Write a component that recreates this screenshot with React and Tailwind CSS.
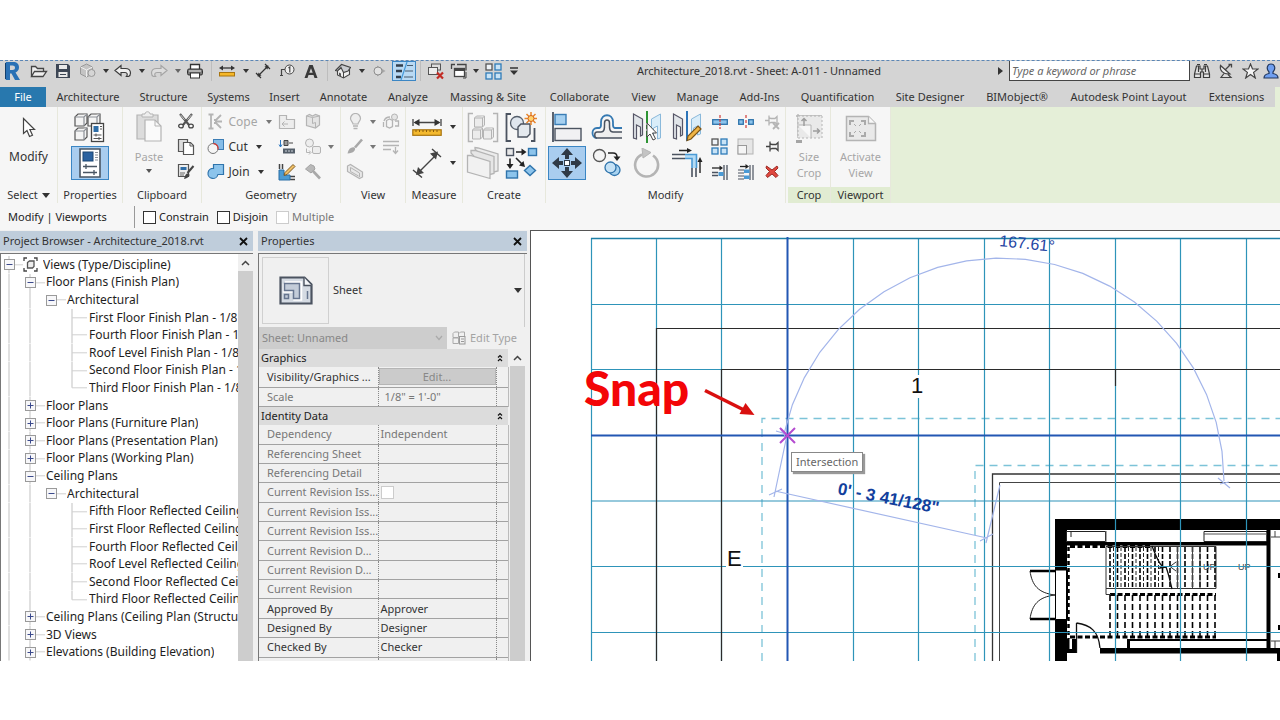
import React from "react";

const G = "#b4b4b4";

function Svg({ w, h, children, className = "" }) {
  return (
    <svg width={w} height={h} viewBox={`0 0 ${w} ${h}`} fill="none" className={`shrink-0 ${className}`} aria-hidden="true">
      {children}
    </svg>
  );
}

function Caret({ color = "#333" }) {
  return (
    <Svg w={6} h={4}>
      <path d="M0 0h6L3 4z" fill={color} />
    </Svg>
  );
}

function IconButton({ label, className = "", children }) {
  return (
    <button type="button" aria-label={label} className={`flex shrink-0 items-center justify-center ${className}`}>
      {children}
    </button>
  );
}

/* ---------- Quick access icons ---------- */

const LogoIcon = () => (
  <Svg w={18} h={20}>
    <path d="M2 2l3-1v18l-3-1z" fill="#123f6d" />
    <path fillRule="evenodd" d="M3 1h7c4 0 6 2 6 5.500 0 2.500-1.500 4-3.500 5L17 19h-5l-3.500-6.500H7V19H3zM7 4.500v4.500h2.500c1.500 0 2.500-.8 2.500-2.200S11 4.500 9.500 4.500z" fill="#2a71b5" />
  </Svg>
);
const OpenIcon = () => (
  <Svg w={18} h={14}>
    <path d="M1.500 12.500v-10h4l2 2h6v3M1.500 12.500l3-5h12l-3.500 5z" stroke="#444" strokeWidth="1.300" fill="#eee" />
  </Svg>
);
const SaveIcon = () => (
  <Svg w={16} h={16}>
    <path d="M1 1h12l2 2v12H1z" fill="#3d4654" />
    <path d="M4 2h8v4H4zM3.500 9h9v5h-9z" fill="#e8e8e8" />
    <path d="M5 11.500h6" stroke="#3d4654" />
  </Svg>
);
const SyncIcon = () => (
  <Svg w={18} h={18}>
    <path d="M1.500 5l6-3 6 3v7l-6 3-6-3z" fill="#c4c4c4" stroke="#999" />
    <path d="M1.500 5l6 3 6-3M7.500 8v7" stroke="#eee" />
    <circle cx="12.500" cy="11" r="3.500" fill="#d5d5d5" stroke="#999" />
  </Svg>
);
const UndoIcon = ({ color = "#3c3c3c", fill = "#eee" }) => (
  <Svg w={18} h={14}>
    <path d="M1 6.500L7 1.500v3h4.500c3 0 5 2 5 4.500 0 1.500-.8 3-2 3.500h-2c1.300-1.500 1-4-1.500-4H7v3z" fill={fill} stroke={color} strokeWidth="1.200" />
  </Svg>
);
const PrintIcon = () => (
  <Svg w={18} h={16}>
    <path d="M4.500 6V1.500h9V6" stroke="#333" strokeWidth="1.300" fill="#fff" />
    <rect x="1.500" y="6" width="15" height="6" rx="1.500" fill="#777" stroke="#333" />
    <rect x="4.500" y="10" width="9" height="5" fill="#fff" stroke="#333" />
    <path d="M3 8h12" stroke="#eee" />
  </Svg>
);
const RulerIcon = () => (
  <Svg w={16} h={12}>
    <path d="M2 3h12" stroke="#333" strokeWidth="1.300" />
    <path d="M0 3l4-2.500v5zM16 3l-4-2.500v5z" fill="#333" />
    <rect x=".5" y="7.500" width="15" height="3.500" fill="#f5b729" stroke="#a8740f" />
  </Svg>
);
const AlignedDimIcon = () => (
  <Svg w={16} h={16}>
    <path d="M3 13L13 3M1 10l5 5M10 1l5 5" stroke="#333" strokeWidth="1.200" />
    <path d="M2.500 13.500l1-4 3 3zM13.500 2.500l-1 4-3-3z" fill="#333" />
  </Svg>
);
const TagIcon = () => (
  <Svg w={16} h={14}>
    <circle cx="10.500" cy="5.500" r="4.500" stroke="#444" fill="#eee" />
    <path d="M9.500 4l1.300-1v5.500M6 5.500H2.500V11M1 11.500h3" stroke="#444" strokeWidth="1.200" />
  </Svg>
);
const LetterIcon = () => (
  <Svg w={14} h={15}>
    <path fillRule="evenodd" d="M5.300 1h3.400L13.500 14h-3l-1-3h-5l-1 3h-3zM7 4.200L5.300 8.800h3.400z" fill="#3a3a3a" />
  </Svg>
);
const HomeIcon = () => (
  <Svg w={16} h={16}>
    <path d="M2.500 7l5-2.500 7 2v5l-6 3.500-6-3z" fill="#eee" stroke="#444" strokeWidth="1.100" />
    <path d="M.5 7.500l6-6 9 3-2.500 3.500-4.500 1.500L6 4.500 2.500 8z" fill="#c9ccd0" stroke="#444" strokeWidth="1.100" />
    <path d="M4 9.500l2 1v3l-2-1z" fill="#555" />
    <path d="M8.500 9.500V15" stroke="#444" />
  </Svg>
);
const SectionIcon = () => (
  <Svg w={14} h={14}>
    <path d="M5 1.500L13.500 7 5 12.500z" fill="#a9a9a9" />
    <circle cx="6" cy="7" r="4" fill="#e2e2e2" stroke="#8d8d8d" />
  </Svg>
);
const ThinLinesIcon = () => (
  <Svg w={20} h={18}>
    <path d="M2 3.500h7M2 9h6M2 15h5" stroke="#333f4d" strokeWidth="2.600" />
    <path d="M13 3.500h6M11 9h8M10 15h9" stroke="#4b5d6e" strokeWidth="1.200" />
    <path d="M13 0L7 18" stroke="#4398d8" strokeWidth="1.200" />
  </Svg>
);
const CloseViewsIcon = () => (
  <Svg w={17} h={17}>
    <rect x="4.500" y="1" width="9" height="6" stroke="#555" fill="#ddd" />
    <rect x="1.500" y="4.500" width="9" height="7" stroke="#555" fill="#eee" />
    <path d="M10 9.500l6 6M16 9.500l-6 6" stroke="#c22c25" strokeWidth="2.200" />
  </Svg>
);
const SwitchIcon = () => (
  <Svg w={18} h={17}>
    <path d="M7 1.500h9v6M1.500 6V1.500H5" stroke="#444" strokeWidth="1.300" />
    <rect x="4.500" y="5.500" width="10" height="8" stroke="#444" strokeWidth="1.300" fill="#fff" />
    <path d="M4.500 7h10" stroke="#444" strokeWidth="2" />
    <path d="M16 9v6h-3" stroke="#444" />
  </Svg>
);
const TileIcon = () => (
  <Svg w={17} h={17}>
    <rect x="1" y="1" width="6" height="6" fill="#eef3f8" stroke="#555" strokeWidth="1.300" />
    <rect x="10" y="1" width="6" height="6" fill="#c8e3f6" stroke="#2e7cb8" strokeWidth="1.300" />
    <rect x="1" y="10" width="6" height="6" fill="#c8e3f6" stroke="#2e7cb8" strokeWidth="1.300" />
    <rect x="10" y="10" width="6" height="6" fill="#c8e3f6" stroke="#2e7cb8" strokeWidth="1.300" />
  </Svg>
);
const BinocularsIcon = () => (
  <Svg w={18} h={16}>
    <path d="M3.500 3h3.500v3h4V3h3.500l2 8v3.500h-6V9h-3v5.500h-6V11z" fill="#e3e3e3" stroke="#3c3c3c" strokeWidth="1.200" />
    <path d="M4 1.500h3M11 1.500h3M1.500 11h6M10.500 11h6M9 6v3M5.500 3v6M12.500 3v6" stroke="#3c3c3c" strokeWidth="1.200" />
  </Svg>
);
const DishIcon = () => (
  <Svg w={16} h={16}>
    <path d="M6 10.500L3 14.500h10l-3-3" stroke="#444" strokeWidth="1.200" fill="#ddd" />
    <path d="M2.500 2.500c-1 4.500 2 9 9.500 8.500z" stroke="#444" strokeWidth="1.200" fill="#eee" />
    <path d="M7 7l5-5M10.500 1.500h3v3" stroke="#444" strokeWidth="1.300" />
  </Svg>
);
const StarIcon = () => (
  <Svg w={17} h={16}>
    <path d="M8.500 1l2 5h5.500l-4.400 3.400L13.300 15 8.500 11.600 3.700 15l1.700-5.600L1 6h5.500z" stroke="#444" strokeWidth="1.200" fill="#f5f5f5" />
  </Svg>
);
const UserIcon = () => (
  <Svg w={16} h={16}>
    <path d="M1 15c0-3 2-4 5-4.500V9C3 6 4 1 8 1s5 5 2 8v1.500c3 .5 5 1.500 5 4.500z" fill="#6f9ff0" stroke="#23395f" strokeWidth="1.200" />
  </Svg>
);

/* ---------- Ribbon icons ---------- */

const CursorIcon = () => (
  <Svg w={14} h={22}>
    <path d="M1.500 1.500v15l3.500-3 2.500 6 3-1.300-2.600-5.700H12.500z" fill="#fff" stroke="#444" strokeWidth="1.200" />
  </Svg>
);
const TypePropsIcon = () => (
  <Svg w={32} h={32}>
    {[[1, 2], [14, 2], [1, 16]].map(([x, y]) => (
      <g key={`${x}-${y}`} stroke="#555" strokeWidth="1.200" fill="#f4f4f4">
        <path d={`M${x} ${y + 4}l3-3h9v9l-3 3h-9z`} />
        <path d={`M${x} ${y + 4}h9l3-3M${x + 9} ${y + 4}v9`} stroke="#8b8f96" />
      </g>
    ))}
    <rect x="17.500" y="12.500" width="12" height="18" fill="#fff" stroke="#444" strokeWidth="1.300" />
    <rect x="19.500" y="15" width="5" height="6" fill="#2f6ea8" />
    <path d="M26 15.500h2M26 18h2M19.500 24h8M19.500 27.500h8M22 22.500v3M25 26v3" stroke="#555" />
  </Svg>
);
const PropsIcon = () => (
  <Svg w={24} h={32}>
    <path d="M2 2h20v28H2z" fill="#fff" stroke="#4a5663" strokeWidth="1.600" />
    <rect x="5" y="5" width="10" height="9" fill="#2b62a0" stroke="#1d4673" />
    <path d="M17 5.500h3M17 8h3M17 10.500h3M17 13h3" stroke="#8a9099" />
    <path d="M5 19.500h14M5 25.500h14M8 17v5M16 23v5" stroke="#4a5663" strokeWidth="1.300" />
  </Svg>
);
const PasteIcon = () => (
  <Svg w={28} h={32}>
    <path d="M2 4h21v24H2z" fill="#dcdcdc" stroke={G} strokeWidth="1.200" />
    <path d="M7 6V3h3c0-3 5-3 5 0h3v3z" fill="#eee" stroke={G} />
    <path d="M10 9h10l6 6v15H10z" fill="#fafafa" stroke={G} strokeWidth="1.200" />
    <path d="M20 9v6h6" stroke={G} />
  </Svg>
);
const CutIcon = () => (
  <Svg w={18} h={17}>
    <path d="M3 1l9 11M15 1L6 12" stroke="#555" strokeWidth="2.200" />
    <path d="M3.500 1.800l4 4.800M14.500 1.800l-4 4.800" stroke="#eee" strokeWidth=".8" />
    <ellipse cx="4" cy="13" rx="2.300" ry="1.900" stroke="#444" strokeWidth="1.300" />
    <ellipse cx="14" cy="13" rx="2.300" ry="1.900" stroke="#444" strokeWidth="1.300" />
  </Svg>
);
const CopyIcon = () => (
  <Svg w={18} h={18}>
    <path d="M1.500 1.500h9v12h-9z" fill="#ddd" stroke="#555" strokeWidth="1.200" />
    <path d="M6.500 4.500h7l3 3v9h-10z" fill="#fff" stroke="#555" strokeWidth="1.200" />
    <path d="M13 4.500V8h3.500" stroke="#555" />
  </Svg>
);
const MatchIcon = () => (
  <Svg w={18} h={18}>
    <path d="M1.500 1.500h10v12h-10z" fill="#eee" stroke="#555" strokeWidth="1.200" />
    <path d="M3.500 4h6v3h-6z" fill="#2f6ea8" />
    <path d="M3 10h5M3 12h4" stroke="#666" />
    <path d="M16.500 3l-6 7" stroke="#444" strokeWidth="2" />
    <path d="M7 16c1-4 2-6 4.500-5.500 2 1 1 4.500-4.500 5.500z" fill="#444" />
  </Svg>
);
const CopeIcon = () => (
  <Svg w={17} h={17}>
    <path d="M1.500 1.500h5M1.500 15.500h5M4 2v13M7 7h2l5-5M7 10h2l5 5M8 8.500h7" stroke={G} strokeWidth="1.800" />
  </Svg>
);
const CutGeomIcon = () => (
  <Svg w={18} h={17}>
    <rect x="6.500" y="1.500" width="10" height="10" fill="#86bde8" stroke="#3c7db5" />
    <circle cx="6" cy="10.500" r="5" fill="#f5f5f5" stroke="#777" />
    <path d="M6.500 5.500a5 5 0 0 1 4.500 6" stroke="#cf3b38" strokeWidth="1.300" />
  </Svg>
);
const JoinGeomIcon = () => (
  <Svg w={18} h={17}>
    <path d="M6.500 1.500h10v10h-5.600A5 5 0 1 1 6.500 5.500z" fill="#8cc4ec" stroke="#2f74ac" strokeWidth="1.200" />
  </Svg>
);
const NotchIcon = () => (
  <Svg w={18} h={16}>
    <path d="M1.500 1.500h7v4h8v9h-15z" fill="#ededed" stroke={G} strokeWidth="1.200" />
    <path d="M10 10H4M6.500 7.500L4 10l2.500 2.500" stroke={G} />
  </Svg>
);
const BoxIcon = () => (
  <Svg w={16} h={17}>
    <path d="M1.500 3l3-1.500 3 1.500 3-1.500 4 1.500v9l-4 3-9-2.500z" fill="#e4e4e4" stroke={G} strokeWidth="1.200" />
    <path d="M1.500 3l6 1.500 7-1.500M7.500 4.500v6l3-1v5.500" stroke={G} />
  </Svg>
);
const SplitIcon = () => (
  <Svg w={18} h={16}>
    <path d="M2.500 1v7M1 5.500L2.500 8 4 5.500" stroke="#2f78c0" />
    <path d="M6 1.500h4v5H6zM11 4h4" stroke="#444" fill="#999" />
    <rect x="5" y="9.500" width="12" height="5" fill="#555f6a" />
    <path d="M7 12h9" stroke="#cfd6dd" strokeDasharray="2 1" />
  </Svg>
);
const OffsetShapesIcon = () => (
  <Svg w={18} h={17}>
    <circle cx="5.500" cy="5" r="4" stroke={G} fill="#eee" />
    <rect x="8.500" y="8.500" width="8" height="7" rx="1.500" stroke={G} fill="#eee" />
    <path d="M2.500 10.500v4H6M5 12.500l2 2-2 2" stroke={G} />
  </Svg>
);
const WallEditIcon = () => (
  <Svg w={18} h={18}>
    <path d="M1.500 1v5M4.500 1v5M12 16.500h5M12 13.500h5" stroke="#444" strokeWidth="1.500" />
    <path d="M1 7h5v5h6v5H1z" fill="#4b9bd3" stroke="#2b6fa5" />
    <path d="M15 1.500l2 2-8 8-3 1 1-3z" fill="#f0c066" stroke="#7d5a22" />
  </Svg>
);
const HammerIcon = () => (
  <Svg w={18} h={17}>
    <path d="M1.500 6l5-4.500L10 3l1 3-4 4z" fill="#b9b9b9" stroke="#a3a3a3" />
    <path d="M8.500 7.500l7.500 8" stroke="#a9a9a9" strokeWidth="2.600" />
  </Svg>
);
const BulbIcon = () => (
  <Svg w={13} h={17}>
    <path d="M4 11C4 9 1.500 8 1.500 5.500a5 5 0 0 1 10 0C11.500 8 9 9 9 11z" fill="#eee" stroke={G} strokeWidth="1.200" />
    <path d="M4 13h5M4.500 15.500h4" stroke={G} strokeWidth="1.500" />
  </Svg>
);
const LinkBoxIcon = () => (
  <Svg w={18} h={17}>
    <circle cx="12.500" cy="4" r="3" stroke={G} fill="#e5e5e5" />
    <path d="M2 8c1-3 3-4 6-4M4.500 7.500l3-1.500 3 1.500v6l-3 1.500-3-1.500zM1.500 9v5M13 8h3.500v5H13" stroke={G} strokeWidth="1.300" />
  </Svg>
);
const BrushIcon = () => (
  <Svg w={18} h={17}>
    <path d="M16 1.500l-7 8" stroke="#a8a8a8" strokeWidth="2.600" />
    <path d="M1.500 15.500c1-5 4-7 7-6 2 2-1 6-7 6z" fill="#a8a8a8" />
  </Svg>
);
const LinesIcon = () => (
  <Svg w={18} h={16}>
    <path d="M1 2.500h16M1 6.500h16M1 10.500h8" stroke={G} strokeWidth="1.500" />
    <path d="M13.500 8v6M11 11.500l2.500 3 2.500-3" stroke={G} strokeWidth="1.300" />
  </Svg>
);
const BeamIcon = () => (
  <Svg w={18} h={17}>
    <path d="M1.500 3l3-1.500 12 7.500v5l-3 1.500-12-7z" fill="#e8e8e8" stroke={G} strokeWidth="1.200" />
    <path d="M4.500 4.500l9 5.500v4M4.500 4.500v4l8 4.500" stroke={G} />
  </Svg>
);
const BigRulerIcon = () => (
  <Svg w={30} h={20}>
    <path d="M3 5.500h24M1 2v7M29 2v7" stroke="#444" strokeWidth="1.300" />
    <path d="M1.500 5.500l6-3.500v7zM28.500 5.500l-6-3.500v7z" fill="#333" />
    <rect x=".8" y="12.800" width="28.400" height="5.500" fill="#f4b92e" stroke="#a8740f" strokeWidth="1.200" />
    <path d="M4 13v2M7.500 13v2M11 13v2M14.500 13v2M18 13v2M21.500 13v2M25 13v2" stroke="#8a5c0a" />
  </Svg>
);
const BigDimIcon = () => (
  <Svg w={30} h={30}>
    <path d="M6 25L25 6M1 22l9 7.500M20 1l9 8" stroke="#444" strokeWidth="1.400" />
    <path d="M4 27l2-8 6 6zM26 3.500l-2 8-6-6z" fill="#444" />
  </Svg>
);
const AssemblyIcon = () => (
  <Svg w={32} h={31}>
    <path d="M6 1.500H1.500v28H6M26 1.500h4.500v28H26" stroke={G} strokeWidth="1.500" />
    <g fill="#ececec" stroke={G}>
      <path d="M7.500 6l2-2h8v9l-2 2h-8zM5.500 18l2-2h8v9l-2 2h-8zM16.500 18l2-2h8v9l-2 2h-8z" />
      <path d="M7.500 6h8l2-2M15.500 6v9M5.500 18h8l2-2M13.500 18v9M16.500 18h8l2-2M24.500 18v9" />
    </g>
  </Svg>
);
const CreateGroupIcon = () => (
  <Svg w={32} h={31}>
    <path d="M6 2H1.500v27H6M26 29h3.500V16" stroke="#4b5360" strokeWidth="1.800" />
    <circle cx="12" cy="11" r="6.500" fill="#dfe6ee" stroke="#555f6c" strokeWidth="1.300" />
    <path d="M13 15l3-3h9v10l-3 3h-9z" fill="#e4e9ee" stroke="#4b5360" strokeWidth="1.400" />
    <path d="M26 0v13M19.500 6.500H32M21.500 2l9 9M30.500 2l-9 9" stroke="#e8862c" strokeWidth="1.500" />
    <circle cx="26" cy="6.500" r="3" fill="#ffd26b" stroke="#d5621b" />
  </Svg>
);
const PartsIcon = () => (
  <Svg w={34} h={34}>
    <path d="M9 3V1.500l3 .5 20 6v17l-4 1z" fill="#ececec" stroke={G} strokeWidth="1.300" />
    <path d="M5 7V4.500h4l19 6v17l-4 1z" fill="#e6e6e6" stroke={G} strokeWidth="1.300" />
    <path d="M1.500 9.500h3L24 15.500v17L1.500 26z" fill="#f1f1f1" stroke={G} strokeWidth="1.300" />
  </Svg>
);
const SimilarIcon = () => (
  <Svg w={33} h={33}>
    <rect x="1.500" y="1.500" width="7" height="7" stroke="#4b5360" strokeWidth="1.400" fill="#e8e8e8" />
    <path d="M11 5h8M5 11.500v8M11 11l6 6" stroke="#222" strokeWidth="1.600" />
    <path d="M21.500 5l-5-3.500v7zM5 22l-3.500-5h7zM20 20l-1.500-6-4.500 4.500z" fill="#222" />
    <rect x="23.500" y="1.500" width="8" height="7" fill="#8cc4ec" stroke="#2f74ac" strokeWidth="1.400" />
    <rect x="1.500" y="24" width="11" height="7" fill="#8cc4ec" stroke="#2f74ac" strokeWidth="1.400" />
    <path d="M25 18.500l5.500 5-5.500 5-5.500-5z" fill="#8cc4ec" stroke="#2f74ac" strokeWidth="1.400" />
  </Svg>
);
const AlignIcon = () => (
  <Svg w={32} h={32}>
    <path d="M2 1v30" stroke="#4b5360" strokeWidth="1.800" />
    <rect x="4" y="3.500" width="11" height="10" fill="#a6d0f0" stroke="#3a7db5" strokeWidth="1.400" />
    <rect x="4" y="17.500" width="26" height="12" fill="#f1f1f3" stroke="#4b5360" strokeWidth="1.400" />
  </Svg>
);
const OffsetIcon = () => (
  <Svg w={32} h={28}>
    <path d="M6 25c-6 0-6-10 0-10h2.500c2-.5 1.500-3 1.500-6 0-9 12-9 12 0 0 3-.5 5.500 1.500 6H31" stroke="#3579b2" strokeWidth="1.800" />
    <path d="M31 25H6c-3 0-3-6 0-6h4c4 0 3.500-5 3.500-9s5-4 5 0-.5 9 3.500 9h9" stroke="#4b5360" strokeWidth="1.500" fill="#efefef" />
  </Svg>
);
const MirrorPickIcon = () => (
  <Svg w={30} h={32}>
    <path d="M1.500 3l9 5v16l-2 1v-9l-4-2v14l-3-1z" strokeWidth="1.200" stroke="#556" fill="#e1e5e9" />
    <path d="M28.500 3l-9 5v16l2 1v-8l4-2v13l3-1z" stroke="#8ab9db" fill="#d9edf9" />
    <path d="M15 0v32" stroke="#2e9434" strokeWidth="2" strokeDasharray="12 2 4 2" />
    <path d="M15 12v14l3-3 3 6 2.500-1.200-3-5.800h4z" fill="#fff" stroke="#444" />
  </Svg>
);
const MirrorDrawIcon = () => (
  <Svg w={30} h={32}>
    <path d="M1.500 3l9 5v16l-2 1v-9l-4-2v14l-3-1z" strokeWidth="1.200" stroke="#556" fill="#e1e5e9" />
    <path d="M28.500 3l-9 5v16l2 1v-8l4-2v9l3-1z" stroke="#8ab9db" fill="#d9edf9" />
    <path d="M15 0v30" stroke="#2c74b8" strokeWidth="2" />
    <path d="M26 15l3 3-10 10-4 1.500 1-4.500z" fill="#f0b545" stroke="#7c5519" strokeWidth="1.200" />
  </Svg>
);
const MoveIcon = () => (
  <Svg w={30} h={30}>
    <path d="M15 0l6 7h-4v4h-4V7H9zM15 30l6-7h-4v-4h-4v4H9zM0 15l7-6v4h4v4H7v4zM30 15l-7-6v4h-4v4h4v4z" fill="#2f3a47" />
    <rect x="12.500" y="12.500" width="5" height="5" fill="#fff" stroke="#2f3a47" />
  </Svg>
);
const CopyElemIcon = () => (
  <Svg w={30} h={30}>
    <circle cx="7.500" cy="7.500" r="6" fill="#f5f5f5" stroke="#555" strokeWidth="1.300" />
    <path d="M16 5h5c3 0 4 2 4 4" stroke="#222" strokeWidth="1.500" />
    <path d="M21.500 8.500h7L25 13z" fill="#222" />
    <circle cx="22.500" cy="22" r="5.500" fill="#a9d3f0" stroke="#2f74ac" strokeWidth="1.300" />
    <circle cx="18.500" cy="19.500" r="5.500" fill="#c5e2f6" stroke="#2f74ac" strokeWidth="1.300" />
  </Svg>
);
const RotateIcon = () => (
  <Svg w={28} h={30}>
    <path d="M9 6.500a11.500 11.500 0 1 0 11 1" stroke={G} strokeWidth="2.600" />
    <path d="M9 0l9 4.500L10 10z" fill="#c4c4c4" stroke={G} />
  </Svg>
);
const TrimIcon = () => (
  <Svg w={32} h={30}>
    <path d="M1 6.500h13M1 10.500h13M21 20v9M25 20v9" stroke="#4b5360" strokeWidth="1.600" />
    <path d="M14 6.500h11.500V20H21v-9.500h-7z" fill="#b5dbf4" />
    <path d="M14 6.500h11.500V20M14 10.500h7V20" stroke="#4a9ad5" strokeWidth="1.600" />
    <path d="M8 2.500h10M29 25V13" stroke="#222" strokeWidth="1.400" />
    <path d="M21 2.500l-5-2.500v5zM29 9l-2.500 5h5z" fill="#222" />
  </Svg>
);
const SplitElemIcon = () => (
  <Svg w={16} h={14}>
    <rect x=".7" y="4.700" width="14.600" height="4.600" fill="#8cc4ec" stroke="#2f74ac" strokeWidth="1.300" />
    <path d="M8 0v14" stroke="#cf3b38" strokeWidth="1.200" strokeDasharray="3 1" />
  </Svg>
);
const SplitGapIcon = () => (
  <Svg w={16} h={14}>
    <rect x=".7" y="4.700" width="4.600" height="4.600" fill="#8cc4ec" stroke="#2f74ac" strokeWidth="1.300" />
    <rect x="10.700" y="4.700" width="4.600" height="4.600" fill="#8cc4ec" stroke="#2f74ac" strokeWidth="1.300" />
    <path d="M8 0v14" stroke="#cf3b38" strokeWidth="1.200" strokeDasharray="3 2" />
  </Svg>
);
const PinShape = ({ color }) => (
  <path d="M1 6.500h4M5 1.500v10M5 3.500l2 1h4l2-2v8l-2-2H7l-2 1" stroke={color} strokeWidth="1.300" />
);
const UnpinIcon = () => (
  <Svg w={16} h={16}>
    <PinShape color={G} />
    <path d="M9 9l6 6M15 9l-6 6" stroke={G} strokeWidth="1.800" />
  </Svg>
);
const PinIcon = () => (
  <Svg w={14} h={13}>
    <PinShape color="#444" />
  </Svg>
);
const ScaleIcon = () => (
  <Svg w={17} h={17}>
    <rect x="1" y="1" width="15" height="15" stroke={G} fill="#e6e6e6" />
    <rect x="1" y="7.500" width="8.500" height="8.500" stroke="#999" fill="#f5f5f5" />
  </Svg>
);
const TrimSingleIcon = () => (
  <Svg w={17} h={16}>
    <path d="M1 4h9" stroke="#222" strokeWidth="1.300" />
    <path d="M12 4L8.500 1.500v5z" fill="#222" />
    <path d="M1 8.500h6M1 11.500h6M13 1v15M16 1v15" stroke="#4b5360" strokeWidth="1.300" />
    <path d="M7.500 8h5v4h-5z" fill="#4a9ad5" />
  </Svg>
);
const TrimMultiIcon = () => (
  <Svg w={17} h={16}>
    <path d="M3 2.500h6" stroke="#222" strokeWidth="1.300" />
    <path d="M12 2.500L8.500 0v5z" fill="#222" />
    <path d="M1 6h6M1 9h6M1 12h6M1 15h6M13 1v15M16 1v15" stroke="#4b5360" strokeWidth="1.200" />
    <path d="M7 5.500h5.500v3.500H7zM7 11.500h5.500V15H7z" fill="#4a9ad5" />
  </Svg>
);
const DeleteIcon = () => (
  <Svg w={14} h={13}>
    <path d="M1.500 1L7 5l5-4 1 2-3.500 3.500 3.500 4-2 2L7 9l-4.500 3.500L1 10.500l3.500-4L1 3z" fill="#e0483f" stroke="#9d2a24" />
  </Svg>
);
const SizeCropIcon = () => (
  <Svg w={28} h={32}>
    <path d="M3 1v24M1 3h26" stroke={G} strokeWidth="1.300" />
    <path d="M3 3h24v22H3z" fill="#e9e9e9" stroke={G} strokeDasharray="2 2" />
    <path d="M3 12h13v13" stroke={G} fill="#f7f7f7" />
    <path d="M9 13V6M18 18h6M6.500 8L9 5.500 11.500 8M22 15.500l2.500 2.500-2.500 2.500" stroke="#9d9d9d" strokeWidth="1.500" />
    <path d="M1 28.500h6" stroke="#a5a5a5" strokeWidth="3" />
  </Svg>
);
const ActivateIcon = () => (
  <Svg w={32} h={27}>
    <path d="M1.500 1.500h22l7 7v17h-29z" fill="#e9e9e9" stroke={G} strokeWidth="1.500" />
    <path d="M23.500 1.500v7h7" fill="#f8f8f8" stroke={G} strokeWidth="1.300" />
    <path d="M5 10V6h4M16 6h4v4M20 17v4h-4M9 21H5v-4" stroke="#aaa" strokeWidth="2" />
    <path d="M9 9l2 2M16 9l-2 2M16 18l-2-2M9 18l2-2" stroke="#aaa" />
  </Svg>
);

/* ---------- Layout pieces ---------- */

function Panel({ label, className = "", labelClass = "", caret = false, children }) {
  return (
    <section className={`flex h-24 shrink-0 flex-col border-r border-[#e7e8dc] ${className}`}>
      <div className="flex flex-1 justify-center">{children}</div>
      <div className={`flex h-4 items-center justify-center gap-1 leading-4 ${labelClass}`}>
        {label}
        {caret && (
          <Svg w={8} h={5}>
            <path d="M0 0h8L4 5z" fill="#333" />
          </Svg>
        )}
      </div>
    </section>
  );
}

const Col = ({ className = "", children }) => <div className={`flex shrink-0 flex-col pt-0.5 ${className}`}>{children}</div>;

function SmallTool({ label, text, caret, disabled, icon }) {
  return (
    <button
      type="button"
      aria-label={label}
      disabled={disabled}
      className={`flex h-[25px] items-center whitespace-nowrap ${disabled ? "text-[#a6a6a6]" : ""}`}
    >
      <span className="flex w-[18px] shrink-0 justify-center">{icon}</span>
      {text && <span className="ml-1 text-xs">{text}</span>}
      {caret && (
        <span className={text ? "ml-2" : "ml-1.5"}>
          <Caret color={disabled ? "#777" : "#333"} />
        </span>
      )}
    </button>
  );
}

const BigTool = ({ label, active, children, className = "w-10" }) => (
  <button type="button" aria-label={label} className={`flex h-9 items-center justify-center ${className}`}>
    {active ? <span className="flex h-[34px] w-[38px] items-center justify-center border border-[#3b86c4] bg-[#a9cdef]">{children}</span> : children}
  </button>
);

const tabs = [
  ["Architecture", "w-[84px]"],
  ["Structure", "w-[67px]"],
  ["Systems", "w-[63px]"],
  ["Insert", "w-[49px]"],
  ["Annotate", "w-[69px]"],
  ["Analyze", "w-[60px]"],
  ["Massing & Site", "w-[100px]"],
  ["Collaborate", "w-[83px]"],
  ["View", "w-[45px]"],
  ["Manage", "w-[63px]"],
  ["Add-Ins", "w-[61px]"],
  ["Quantification", "w-[95px]"],
  ["Site Designer", "w-[90px]"],
  ["BIMobject®", "w-[84px]"],
  ["Autodesk Point Layout", "w-[139px]"],
  ["Extensions", "w-[77px]"],
];

const Divider = ({ className = "" }) => <span className={`h-5 w-px shrink-0 bg-[#bdbdbd] ${className}`} />;

function TitleBar() {
  return (
    <header className="flex h-6 shrink-0 items-center border-t border-dashed border-[#5b86b5] bg-[#d4d4d4] pb-[3px]">
      <IconButton label="Application menu" className="w-6"><LogoIcon /></IconButton>
      <IconButton label="Open" className="ml-[3px] w-6"><OpenIcon /></IconButton>
      <IconButton label="Save" className="w-6"><SaveIcon /></IconButton>
      <IconButton label="Synchronize" className="w-[26px]"><SyncIcon /></IconButton>
      <IconButton label="Synchronize options" className="w-[10px]"><Caret /></IconButton>
      <IconButton label="Undo" className="w-6"><UndoIcon /></IconButton>
      <IconButton label="Undo list" className="ml-0.5 w-[10px]"><Caret /></IconButton>
      <IconButton label="Redo" className="w-6"><span className="-scale-x-100"><UndoIcon color="#a5a5a5" fill="#ddd" /></span></IconButton>
      <IconButton label="Redo list" className="ml-0.5 w-[10px]"><Caret color="#666" /></IconButton>
      <IconButton label="Print" className="w-6"><PrintIcon /></IconButton>
      <Divider className="ml-1" />
      <IconButton label="Measure" className="ml-[3px] w-6"><RulerIcon /></IconButton>
      <IconButton label="Measure options" className="ml-0.5 w-[10px]"><Caret /></IconButton>
      <IconButton label="Aligned dimension" className="w-6"><AlignedDimIcon /></IconButton>
      <IconButton label="Tag by category" className="w-6"><TagIcon /></IconButton>
      <IconButton label="Text" className="w-6"><LetterIcon /></IconButton>
      <Divider className="ml-1" />
      <IconButton label="Default 3D view" className="ml-[3px] w-6"><HomeIcon /></IconButton>
      <IconButton label="3D view options" className="ml-0.5 w-[10px]"><Caret /></IconButton>
      <IconButton label="Section" className="w-6"><SectionIcon /></IconButton>
      <IconButton label="Thin lines" className="ml-px h-5 w-6 border border-[#3b86c4] bg-[#b9d9f3]"><ThinLinesIcon /></IconButton>
      <Divider className="ml-1" />
      <IconButton label="Close hidden windows" className="ml-0.5 w-6"><CloseViewsIcon /></IconButton>
      <IconButton label="Switch windows" className="w-6"><SwitchIcon /></IconButton>
      <IconButton label="Switch windows list" className="w-[10px]"><Caret /></IconButton>
      <IconButton label="Tile windows" className="w-6"><TileIcon /></IconButton>
      <IconButton label="Customize quick access toolbar" className="ml-[3px] w-3">
        <Svg w={8} h={8}><path d="M0 1h8" stroke="#333" strokeWidth="1.500" /><path d="M0 3.500h8L4 8z" fill="#333" /></Svg>
      </IconButton>
      <h1 className="flex-1 truncate text-center leading-5">Architecture_2018.rvt - Sheet: A-011 - Unnamed</h1>
      <Svg w={5} h={8} className="mr-[6px]"><path d="M0 0l5 4-5 4z" fill="#333" /></Svg>
      <input
        aria-label="Search help"
        placeholder="Type a keyword or phrase"
        className="h-5 w-[181px] shrink-0 self-start border border-t-0 border-[#444] bg-white px-0.5 text-[11px] italic outline-none placeholder:text-[#666]"
      />
      <IconButton label="Search" className="w-6"><BinocularsIcon /></IconButton>
      <IconButton label="Communication center" className="w-6"><DishIcon /></IconButton>
      <IconButton label="Favorites" className="w-6"><StarIcon /></IconButton>
      <IconButton label="Sign in" className="w-[18px] overflow-hidden"><UserIcon /></IconButton>
    </header>
  );
}

function TabBar() {
  return (
    <nav className="flex h-[23px] shrink-0 items-end bg-[#d4d4d4] text-[#333]">
      <button type="button" className="h-5 w-[46px] shrink-0 bg-[#2878ae] text-white">File</button>
      {tabs.map(([name, width]) => (
        <button key={name} type="button" className={`h-5 shrink-0 whitespace-nowrap ${width}`}>{name}</button>
      ))}
      <span className="h-5 flex-1 bg-[#e5efd8]" />
    </nav>
  );
}

function Ribbon() {
  return (
    <div className="flex h-24 shrink-0 overflow-hidden bg-[#e5efd8]">
      <div className="flex bg-[#f6f6f6]">
        <Panel label="Select" caret className="w-[58px]">
          <button type="button" className="flex flex-col items-center pt-2.5">
            <CursorIcon />
            <span className="pt-2.5 text-xs leading-4">Modify</span>
          </button>
        </Panel>
        <Panel label="Properties" className="w-[65px]">
          <Col className="w-10">
            <BigTool label="Type properties"><TypePropsIcon /></BigTool>
            <BigTool label="Properties palette" active><PropsIcon /></BigTool>
          </Col>
        </Panel>
        <Panel label="Clipboard" className="w-[79px]">
          <button type="button" disabled className="ml-1 flex w-8 flex-col items-center pt-1 text-[#a6a6a6]">
            <PasteIcon />
            <span className="pt-1.5 pb-1 leading-4">Paste</span>
            <Caret color="#555" />
          </button>
          <Col className="ml-3 w-[18px]">
            <SmallTool label="Cut to clipboard" icon={<CutIcon />} />
            <SmallTool label="Copy to clipboard" icon={<CopyIcon />} />
            <SmallTool label="Match type" icon={<MatchIcon />} />
          </Col>
        </Panel>
        <Panel label="Geometry" className="w-[139px]">
          <Col className="w-[71px]">
            <SmallTool label="Cope" text="Cope" caret disabled icon={<CopeIcon />} />
            <SmallTool label="Cut geometry" text="Cut" caret icon={<CutGeomIcon />} />
            <SmallTool label="Join geometry" text="Join" caret icon={<JoinGeomIcon />} />
          </Col>
          <Col className="w-[26px]">
            <SmallTool label="Wall joins" disabled icon={<NotchIcon />} />
            <SmallTool label="Split face" icon={<SplitIcon />} />
            <SmallTool label="Edit wall" icon={<WallEditIcon />} />
          </Col>
          <Col className="w-8">
            <SmallTool label="Paint" disabled icon={<BoxIcon />} />
            <SmallTool label="Offset shapes" caret disabled icon={<OffsetShapesIcon />} />
            <SmallTool label="Demolish" disabled icon={<HammerIcon />} />
          </Col>
        </Panel>
        <Panel label="View" className="w-[65px]">
          <Col className="w-9">
            <SmallTool label="Hide in view" caret disabled icon={<BulbIcon />} />
            <SmallTool label="Override graphics" caret disabled icon={<BrushIcon />} />
            <SmallTool label="Selection box" disabled icon={<BeamIcon />} />
          </Col>
          <Col className="w-[18px]">
            <SmallTool label="Displace elements" disabled icon={<LinkBoxIcon />} />
            <SmallTool label="Linework" disabled icon={<LinesIcon />} />
          </Col>
        </Panel>
        <Panel label="Measure" className="w-[57px]">
          <Col className="w-[46px]">
            <BigTool label="Measure distance" className="w-[46px] gap-2"><BigRulerIcon /><Caret /></BigTool>
            <BigTool label="Dimension" className="w-[46px] gap-2"><BigDimIcon /><Caret /></BigTool>
          </Col>
        </Panel>
        <Panel label="Create" className="w-[83px]">
          <Col className="w-[38px]">
            <BigTool label="Create assembly" className="w-[38px]"><AssemblyIcon /></BigTool>
            <BigTool label="Create parts" className="w-[38px]"><PartsIcon /></BigTool>
          </Col>
          <Col className="mr-1 w-[38px]">
            <BigTool label="Create group" className="w-[38px]"><CreateGroupIcon /></BigTool>
            <BigTool label="Create similar" className="w-[38px]"><SimilarIcon /></BigTool>
          </Col>
        </Panel>
        <Panel label="Modify" className="w-[240px]">
          <Col className="w-10">
            <BigTool label="Align"><AlignIcon /></BigTool>
            <BigTool label="Move" active><MoveIcon /></BigTool>
          </Col>
          <Col className="w-10">
            <BigTool label="Offset"><OffsetIcon /></BigTool>
            <BigTool label="Copy"><CopyElemIcon /></BigTool>
          </Col>
          <Col className="w-10">
            <BigTool label="Mirror, pick axis"><MirrorPickIcon /></BigTool>
            <BigTool label="Rotate"><RotateIcon /></BigTool>
          </Col>
          <Col className="w-10">
            <BigTool label="Mirror, draw axis"><MirrorDrawIcon /></BigTool>
            <BigTool label="Trim or extend to corner"><TrimIcon /></BigTool>
          </Col>
          <Col className="ml-1 w-[26px]">
            <SmallTool label="Split element" icon={<SplitElemIcon />} />
            <SmallTool label="Array" icon={<TileIcon />} />
            <SmallTool label="Trim single element" icon={<TrimSingleIcon />} />
          </Col>
          <Col className="w-[26px]">
            <SmallTool label="Split with gap" icon={<SplitGapIcon />} />
            <SmallTool label="Scale" disabled icon={<ScaleIcon />} />
            <SmallTool label="Trim multiple elements" icon={<TrimMultiIcon />} />
          </Col>
          <Col className="mr-1 w-[18px]">
            <SmallTool label="Unpin" disabled icon={<UnpinIcon />} />
            <SmallTool label="Pin" icon={<PinIcon />} />
            <SmallTool label="Delete" icon={<DeleteIcon />} />
          </Col>
        </Panel>
        <Panel label="Crop" className="ml-0.5 w-[43px]" labelClass="bg-[#e1ecd2]">
          <button type="button" disabled className="flex flex-col items-center pt-1.5 leading-4 text-[#a6a6a6]">
            <SizeCropIcon />
            <span className="pt-1">Size</span>
            <span>Crop</span>
          </button>
        </Panel>
        <Panel label="Viewport" className="w-[60px]" labelClass="bg-[#e1ecd2]">
          <button type="button" disabled className="flex flex-col items-center pt-2 leading-4 text-[#a6a6a6]">
            <ActivateIcon />
            <span className="pt-[7px]">Activate</span>
            <span>View</span>
          </button>
        </Panel>
      </div>
    </div>
  );
}

function Check({ label, disabled = false }) {
  return (
    <label className={`flex items-center gap-[3px] ${disabled ? "text-[#777]" : ""}`}>
      <input
        type="checkbox"
        disabled={disabled}
        className={`size-[13px] appearance-none border bg-white ${disabled ? "border-[#ccc]" : "border-[#333]"}`}
      />
      {label}
    </label>
  );
}

function OptionsBar() {
  return (
    <div className="flex h-[27px] shrink-0 items-center bg-[#f6f6f6] pt-px pl-2 text-[#222]">
      <span className="w-[126px]">Modify | Viewports</span>
      <span className="mr-2 h-[22px] w-px bg-[#999]" />
      <div className="flex gap-2">
        <Check label="Constrain" />
        <Check label="Disjoin" />
        <Check label="Multiple" disabled />
      </div>
    </div>
  );
}

function PaneHeader({ title }) {
  return (
    <div className="flex h-5 shrink-0 items-center justify-between bg-[#bfcddb] pr-[3px] pl-[3px]">
      <h2>{title}</h2>
      <button type="button" aria-label={`Close ${title}`} className="p-0.5">
        <Svg w={9} h={9}><path d="M1 1l7 7M8 1L1 8" stroke="#111" strokeWidth="1.800" /></Svg>
      </button>
    </div>
  );
}

const tree = [
  [0, "-", "Views (Type/Discipline)"],
  [1, "-", "Floor Plans (Finish Plan)"],
  [2, "-", "Architectural"],
  [3, "", "First Floor Finish Plan - 1/8"],
  [3, "", "Fourth Floor Finish Plan - 1/"],
  [3, "", "Roof Level Finish Plan - 1/8"],
  [3, "", "Second Floor Finish Plan - 1"],
  [3, "end", "Third Floor Finish Plan - 1/8"],
  [1, "+", "Floor Plans"],
  [1, "+", "Floor Plans (Furniture Plan)"],
  [1, "+", "Floor Plans (Presentation Plan)"],
  [1, "+", "Floor Plans (Working Plan)"],
  [1, "-", "Ceiling Plans"],
  [2, "-", "Architectural"],
  [3, "", "Fifth Floor Reflected Ceiling"],
  [3, "", "First Floor Reflected Ceiling"],
  [3, "", "Fourth Floor Reflected Ceili"],
  [3, "", "Roof Level Reflected Ceiling"],
  [3, "", "Second Floor Reflected Ceil"],
  [3, "end", "Third Floor Reflected Ceilin"],
  [1, "+", "Ceiling Plans (Ceiling Plan (Structur"],
  [1, "+", "3D Views"],
  [1, "+", "Elevations (Building Elevation)"],
];

function Guide({ line, stub, end }) {
  return (
    <svg width="21" className="h-full shrink-0 overflow-visible" aria-hidden="true">
      {line && <line x1="8" x2="8" y1="0" y2={end ? "50%" : "100%"} stroke="#d6d6d6" strokeWidth="1.500" />}
      {stub && <line x1="8" x2="23" y1="50%" y2="50%" stroke="#d0d0d0" />}
    </svg>
  );
}

function TreeRow({ level, mark, text }) {
  const guides = [0, 1, 2, 3].slice(0, level + 1);
  return (
    <li className="flex min-h-0 min-w-0 items-center overflow-hidden whitespace-nowrap text-xs leading-4 text-[#1e1e1e]">
      {guides.map((g) => (
        <Guide key={g} line={g !== 2} stub={g === level} end={g === 3 && mark === "end"} />
      ))}
      {(mark === "+" || mark === "-") && (
        <button
          type="button"
          aria-label={`${mark === "+" ? "Expand" : "Collapse"} ${text}`}
          className={`relative -ml-[18px] shrink-0 ${level === 0 ? "mr-2" : "mr-[10px]"}`}
        >
          <Svg w={11} h={11}>
            <rect x=".5" y=".5" width="10" height="10" fill="#f7f7f9" stroke="#9a9a9a" />
            <path d={mark === "+" ? "M2.500 5.500h6M5.500 2.500v6" : "M2.500 5.500h6"} stroke="#3b4a8c" />
          </Svg>
        </button>
      )}
      {level === 0 && (
        <Svg w={15} h={15} className="mr-[5px] bg-white">
          <path d="M4 1H1v3M11 1h3v3M14 11v3h-3M4 14H1v-3" stroke="#444" strokeWidth="1.300" />
          <path d="M4.500 5.500l2-1.500h4.500v5.500l-1.500 1.500h-5z" fill="#eee" stroke="#555" strokeWidth="1.300" />
        </Svg>
      )}
      <span className={`min-w-0 overflow-hidden ${level === 3 ? "ml-1" : ""}`}>{text}</span>
    </li>
  );
}

function ScrollBar({ className }) {
  return (
    <div className={`flex shrink-0 flex-col bg-[#cdcdcd] ${className}`}>
      <button type="button" aria-label="Scroll up" className="flex h-[17px] items-center justify-center bg-[#f0f0f0]">
        <Svg w={9} h={6}><path d="M1 5l3.500-3.500L8 5" stroke="#444" strokeWidth="1.500" /></Svg>
      </button>
    </div>
  );
}

function ProjectBrowser() {
  return (
    <aside className="flex w-[253px] shrink-0 flex-col pt-px">
      <PaneHeader title="Project Browser - Architecture_2018.rvt" />
      <div className="mt-0.5 flex min-h-0 flex-1 border-t border-l border-[#777] bg-white">
        <ul className="grid min-w-0 flex-1 auto-rows-fr grid-cols-1 pt-0.5">
          {tree.map(([level, mark, text], i) => (
            <TreeRow key={i} level={level} mark={mark} text={text} />
          ))}
        </ul>
        <ScrollBar className="w-[15px]" />
      </div>
    </aside>
  );
}

const properties = [
  ["Graphics"],
  ["Visibility/Graphics ...", "edit", "dark"],
  ["Scale", "1/8\" = 1'-0\"", "", "pl-[6px]"],
  ["Identity Data"],
  ["Dependency", "Independent"],
  ["Referencing Sheet", ""],
  ["Referencing Detail", ""],
  ["Current Revision Iss...", "check"],
  ["Current Revision Iss...", ""],
  ["Current Revision Iss...", ""],
  ["Current Revision D...", ""],
  ["Current Revision D...", ""],
  ["Current Revision", ""],
  ["Approved By", "Approver", "dark"],
  ["Designed By", "Designer", "dark"],
  ["Checked By", "Checker", "dark"],
  ["\u00a0", ""],
];

function PropertyRow({ row }) {
  const [name, value, tone, pad = "pl-0.5"] = row;
  if (value === undefined) {
    return (
      <tr className="bg-[#dcdcdc] text-[#222]">
        <th colSpan={3} className="p-0 pr-1 pl-0.5 text-left font-normal">
          <div className="flex items-center justify-between">
            {name}
            <Svg w={6} h={8} className="mr-px"><path d="M1 3.500l2-2 2 2M1 7l2-2 2 2" stroke="#111" strokeWidth="1.200" /></Svg>
          </div>
        </th>
      </tr>
    );
  }
  return (
    <tr className={`border-b border-[#a2a2a2] ${tone === "dark" ? "text-[#333]" : "text-[#777]"}`}>
      <th scope="row" className="border-r border-dotted border-[#888] p-0 pl-2 text-left font-normal whitespace-nowrap">{name}</th>
      <td className={`border-r border-dotted border-[#888] p-0 ${value === "edit" ? "" : pad}`}>
        {value === "edit" && <button type="button" disabled className="block h-[17px] w-full border border-[#b5b5b5] bg-[#cbcbcb] leading-[14px] text-[#888]">Edit...</button>}
        {value === "check" && <input type="checkbox" disabled aria-label="Current revision issued" className="block size-[13px] appearance-none border border-[#ccc] bg-white" />}
        {value !== "edit" && value !== "check" && value}
      </td>
      <td className="border-r border-[#bbb] p-0" />
    </tr>
  );
}

function PropertiesPane() {
  return (
    <aside className="ml-[5px] flex w-[269px] shrink-0 flex-col pt-px">
      <PaneHeader title="Properties" />
      <div className="mt-0.5 flex min-h-0 flex-1 flex-col border-t border-l border-[#777] bg-[#f0f0f0] pr-0.5">
        <div className="flex h-[73px] shrink-0 items-center border-r border-[#ccc] pr-0.5 pl-[3px]">
          <span className="flex h-[67px] w-[67px] items-center justify-center border border-[#d0d0d0]">
            <Svg w={34} h={30}>
              <path d="M1.500 1.500h24l7 7v19h-31z" fill="#d5dbe3" stroke="#4b5360" strokeWidth="2.200" />
              <path d="M25 1.500v8h7.500" fill="#f5f7fa" stroke="#4b5360" strokeWidth="1.400" />
              <path d="M6 7.500h15v15h-4.500v-6M6 7.500v7h10.500" stroke="#fff" strokeWidth="4.500" />
              <path d="M5.500 7.500h15v15h-6v-8h-9zM5.500 18.500h4v4h-4z" fill="#c3ccd9" stroke="#66758f" strokeWidth="1.500" />
              <path d="M28.500 15v8" stroke="#66758f" strokeWidth="1.500" />
            </Svg>
          </span>
          <span className="ml-1 flex-1 text-[#333]">Sheet</span>
          <button type="button" aria-label="Type selector">
            <Svg w={8} h={5}><path d="M0 0h8L4 5z" fill="#333" /></Svg>
          </button>
        </div>
        <div className="flex h-[22px] shrink-0 items-center text-[#888]">
          <div className="relative flex h-[22px] w-[188px] items-center bg-[#cdcdcd]">
            <select aria-label="Type" disabled className="h-full w-full appearance-none pl-[3px]">
              <option>Sheet: Unnamed</option>
            </select>
            <Svg w={8} h={6} className="pointer-events-none absolute right-1"><path d="M1 1l3 3.500L7 1" stroke="#aaa" strokeWidth="1.200" /></Svg>
          </div>
          <button type="button" disabled className="ml-[5px] flex items-center gap-1 whitespace-nowrap text-[#a3a3a3]">
            <Svg w={14} h={14}>
              <path d="M1 2.500l1.500-1.500h4v5.500H1zM7 2.500l1.500-1.500h4V5M1 7h5.500v5.500H1z" stroke="#aaa" />
              <rect x="7.500" y="5.500" width="5.500" height="7.500" stroke="#999" fill="#f0f0f0" />
              <path d="M9 8h3M9 10.500h3" stroke="#999" />
            </Svg>
            Edit Type
          </button>
        </div>
        <div className="flex min-h-0 flex-1 overflow-hidden">
          <table className="h-[328px] w-[249px] shrink-0 table-fixed border-collapse leading-4">
            <colgroup>
              <col className="w-[119px]" />
              <col className="w-[118px]" />
              <col className="w-3" />
            </colgroup>
            <tbody>
              {properties.map((row, i) => (
                <PropertyRow key={i} row={row} />
              ))}
            </tbody>
          </table>
          <ScrollBar className="ml-px w-[15px]" />
        </div>
      </div>
    </aside>
  );
}

/* ---------- Drawing area ---------- */

const arcPoints = Array.from({ length: 23 }, (_, i) => {
  const a = ((167.600 - (i * 167.600) / 22) * Math.PI) / 180;
  return `${(1001.5 + 222.5 * Math.cos(a)).toFixed(1)},${(481 - 223 * Math.sin(a)).toFixed(1)}`;
}).join(" ");

const stairX = Array.from({ length: 15 }, (_, i) => 1110 + i * 7.5);

function FloorPlan() {
  return (
    <g>
      <path d="M1055 519H1280v11H1066.500V661H1055z" fill="#000" />
      <path d="M1055.500 570h12v49.500h-12z" fill="#fff" stroke="#000" />
      <path d="M1066.500 530v131" stroke="#000" />
      <g fill="#fff" stroke="#222">
        <path d="M1066.500 531.500h39v10h-39zM1204 531.500h63v10h-63zM1071 531v6" />
      </g>
      <path d="M1066.500 542h200v3.500h-200zM1266.500 530h4v120h-4zM1100 648h180v5.500h-180zM1277 648h3v13h-3zM1127 639h140v2h-140zM1127 639h3v12h-3zM1066.500 639h3v10h-3zM1072 639h4v14h-10v-4h6z" fill="#000" />
      <path d="M1204 534h63M1106 531v11" stroke="#555" />
      <path d="M1030 571h25M1030 619h25" stroke="#000" strokeWidth="2.500" />
      <path d="M1030 571c2 14 8 22 25 24c-17 2-23 10-25 24" stroke="#222" />
      <path d="M1076.500 623v30M1076.500 623c14 2 22 8 23.500 25" stroke="#111" strokeWidth="1.300" />
      <path d="M1068.500 547v92" stroke="#000" strokeWidth="2.500" strokeDasharray="4 3" />
      <path d="M1070 546.500h82M1070 637h146M1110 594.500h106" stroke="#000" strokeWidth="3" strokeDasharray="5 2.500" />
      <path d="M1106 546.500h110v42h-110zM1106 588.500v6h5M1216 588.500h-110" stroke="#333" />
      {stairX.map((x) => (
        <g key={x}>
          <path d={`M${x} 547v41`} stroke="#000" strokeWidth="1.600" strokeDasharray="5 2" />
          <path d={`M${x} 595v42`} stroke="#000" strokeWidth="1.600" strokeDasharray="6 3" />
          {x < 1160 && <path d={`M${x + 3.5} 547v41`} stroke="#222" strokeDasharray="4 2" />}
        </g>
      ))}
      <path d="M1177.500 547v41M1192.500 547v41M1200 547v41" stroke="#444" />
      <path d="M1152 546c4 10 6 16 10 20l-2 2 6-1c3 8 4 14 6 22" stroke="#111" strokeWidth="1.300" />
      <path d="M1168 566.500h35M1176 562l-6 4.500 6 4.500" stroke="#333" />
      <path d="M1271 537h9M1275 531v6M1271 641h9M1275 641v7" stroke="#444" />
      <path d="M1278 573h2v5h-2zM1278 625h2v5h-2z" fill="#000" />
      <g fontFamily="'Liberation Sans', sans-serif" fontSize="9" fill="#444">
        <text x="1203" y="570">UP</text>
        <text x="1238" y="570">UP</text>
      </g>
    </g>
  );
}

function Canvas() {
  return (
    <main className="relative ml-[3px] min-w-0 flex-1 overflow-hidden border-t border-l border-[#555] bg-white">
      <svg className="absolute inset-0 h-full w-full" fill="none" role="img" aria-label="Sheet view with floor plan">
        <g transform="translate(-531 -231)">
          <FloorPlan />
          <path d="M762 661V418.500H1280" stroke="#7cc3d8" strokeWidth="1.300" strokeDasharray="8 6" />
          <path d="M975 661V465.500H1280" stroke="#7cc3d8" strokeWidth="1.300" strokeDasharray="8 6" />
          <path d="M992.500 661V474H1280" stroke="#333" strokeWidth="1.300" />
          <path d="M999.500 661V482.500H1280" stroke="#444" />
          <g stroke="#2e94b9" strokeWidth="1.200">
            <path d="M591.500 238V661M656.500 238V661M721.500 238V661M853.500 238V661M918.500 238V375M918.500 398V661M984.500 238V661M1049.500 238V661M1115.500 238V661M1180.500 238V661M1246.500 238V661" />
            <path d="M591 304.500H1280M591 369.500H721M591 501H1280M591 566.500H726M743 566.500H1280M591 632.500H1280" />
          </g>
          <path d="M591 238.500H1280" stroke="#1d7fa6" strokeWidth="1.500" />
          <path d="M656.500 661V328.500H1280M721.500 661V369.500H1280M1115.500 370v16" stroke="#2b2b2b" strokeWidth="1.200" />
          <path d="M787.500 237V661M591 435.500H1280" stroke="#2257b3" strokeWidth="2" />
          <g stroke="#a3b5ea" strokeWidth="1.200">
            <polyline points={arcPoints} />
            <path d="M787 435L774 497M775 491L987 538M1000 485L986 543M769 495l13-6M980 541l13-7M1218 478l12 10M1220 484l9-2M776 431l10 3M780 428l5 8" />
          </g>
          <path d="M780 428l15 15M795 428l-15 15" stroke="#b44bd0" strokeWidth="2" />
          <path d="M705 390.500l38 19" stroke="#d9100f" strokeWidth="3.500" />
          <path d="M754.500 415l-15-1 6-11z" fill="#d9100f" />
          <text x="584" y="406" fontFamily="Lato, sans-serif" fontWeight="900" fontSize="48" fill="#f30507">Snap</text>
          <g fontFamily="'Liberation Sans', Arial, sans-serif">
            <g fontSize="22" fill="#111">
              <text x="911" y="393">1</text>
              <text x="727" y="566">E</text>
            </g>
            <text transform="translate(999 246) rotate(6)" fontSize="16" fill="#1f46a3">167.61°</text>
            <text transform="translate(837 494) rotate(11)" fontSize="17" fontWeight="700" fill="#123f9d">0' - 3 41/128"</text>
          </g>
        </g>
      </svg>
      <div role="tooltip" className="absolute top-[221px] left-[260px] border border-[#888] bg-white px-1 text-[11px] leading-[18px] text-[#666] shadow-[2px_2px_1px_#999]">
        Intersection
      </div>
    </main>
  );
}

export default function App() {
  return (
    <div className="flex h-screen flex-col overflow-hidden bg-white pt-[60px] pb-[59px] font-['Noto_Sans','Open_Sans',sans-serif] text-[11px] text-[#333]">
      <TitleBar />
      <TabBar />
      <Ribbon />
      <OptionsBar />
      <div className="flex min-h-0 flex-1 bg-[#f0f0f0]">
        <ProjectBrowser />
        <PropertiesPane />
        <Canvas />
      </div>
    </div>
  );
}
